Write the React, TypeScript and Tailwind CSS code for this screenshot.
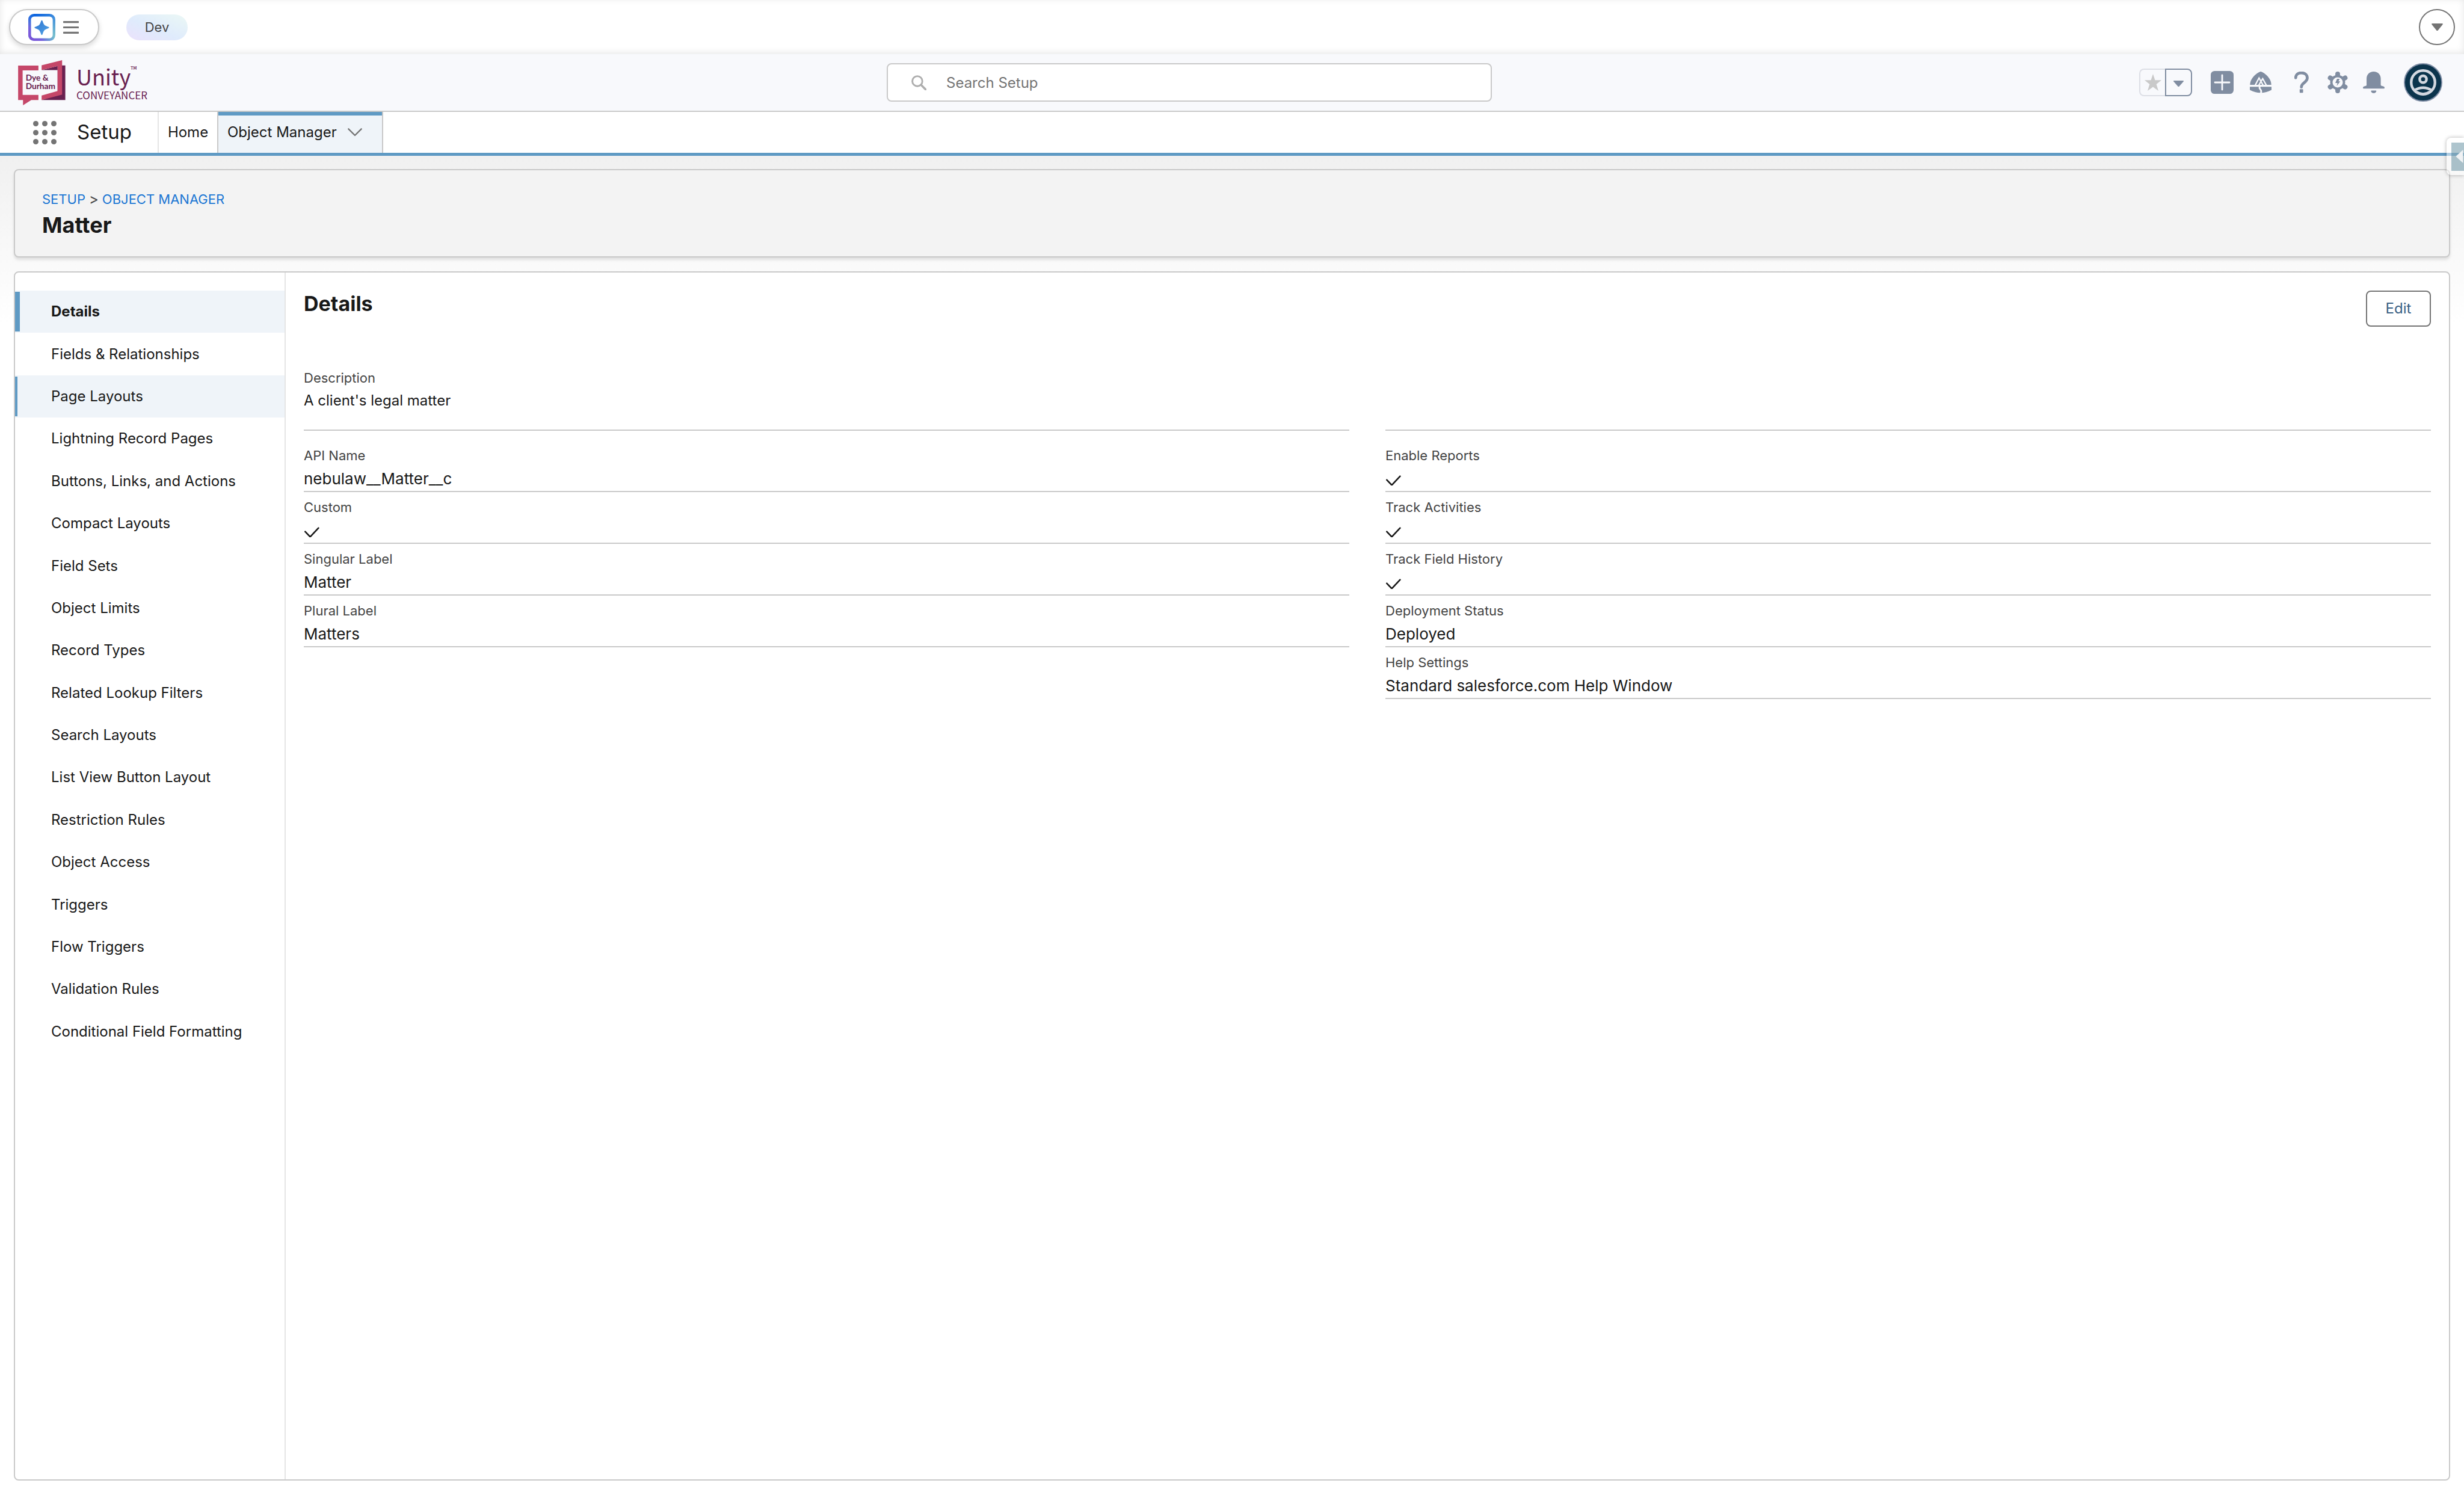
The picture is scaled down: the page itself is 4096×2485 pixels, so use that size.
import type { ReactNode } from "react";

type Field = { label: string; value: string | true };

const SECTIONS = [
  "Details",
  "Fields & Relationships",
  "Page Layouts",
  "Lightning Record Pages",
  "Buttons, Links, and Actions",
  "Compact Layouts",
  "Field Sets",
  "Object Limits",
  "Record Types",
  "Related Lookup Filters",
  "Search Layouts",
  "List View Button Layout",
  "Restriction Rules",
  "Object Access",
  "Triggers",
  "Flow Triggers",
  "Validation Rules",
  "Conditional Field Formatting",
];

const LEFT_FIELDS: Field[] = [
  { label: "API Name", value: "nebulaw__Matter__c" },
  { label: "Custom", value: true },
  { label: "Singular Label", value: "Matter" },
  { label: "Plural Label", value: "Matters" },
];

const RIGHT_FIELDS: Field[] = [
  { label: "Enable Reports", value: true },
  { label: "Track Activities", value: true },
  { label: "Track Field History", value: true },
  { label: "Deployment Status", value: "Deployed" },
  { label: "Help Settings", value: "Standard salesforce.com Help Window" },
];

function EnvironmentBar() {
  return (
    <div className="flex h-[90px] items-center bg-white px-[15px] shadow-[inset_0_-2px_12px_rgba(0,0,0,0.1)]">
      <button
        aria-label="Open menu"
        className="flex h-[60px] w-[150px] items-center gap-[13px] rounded-full border-2 border-[#c9c9c9] bg-white pl-[30px] shadow-[0_4px_8px_rgba(0,0,0,0.15)]"
      >
        <svg viewBox="150 71 144 144" className="size-[45px]">
          <defs>
            <linearGradient id="frame" x1="0.2" y1="0" x2="0.8" y2="1">
              <stop offset="0" stopColor="#0a63e0" />
              <stop offset="0.45" stopColor="#4290dc" />
              <stop offset="1" stopColor="#7cc3cc" />
            </linearGradient>
            <linearGradient id="corner" x1="0" y1="1" x2="0.6" y2="0.4">
              <stop offset="0" stopColor="#8052d8" />
              <stop offset="0.4" stopColor="#7560dc" />
              <stop offset="1" stopColor="#4290dc" stopOpacity="0" />
            </linearGradient>
            <linearGradient id="spark" x1="0" y1="0" x2="1" y2="1">
              <stop offset="0" stopColor="#2f74d0" />
              <stop offset="1" stopColor="#4fa3e6" />
            </linearGradient>
          </defs>
          <rect x="157" y="78" width="130" height="130" rx="24" fill="white" stroke="url(#frame)" strokeWidth="14" />
          <rect x="157" y="78" width="130" height="130" rx="24" fill="none" stroke="url(#corner)" strokeWidth="14" />
          <path
            d="M222 105c3 0 4 4 6 10 5 14 9 18 23 23 6 2 10 3 10 6s-4 4-10 6c-14 5-18 9-23 23-2 6-3 10-6 10s-4-4-6-10c-5-14-9-18-23-23-6-2-10-3-10-6s4-4 10-6c14-5 18-9 23-23 2-6 3-10 6-10Z"
            fill="url(#spark)"
          />
        </svg>
        <svg viewBox="0 0 82 66" className="h-[21px] w-[26px]" fill="#747474">
          <rect width="82" height="10" rx="2" />
          <rect y="28" width="82" height="10" rx="2" />
          <rect y="56" width="82" height="10" rx="2" />
        </svg>
      </button>
      <span className="ml-[45px] flex h-[43px] w-[102px] items-center justify-center rounded-full bg-[linear-gradient(to_top_right,#ebe1fb_0%,#dfebfc_45%,#ebf8f5_100%)] text-[22px] text-[#444]">
        Dev
      </span>
      <button
        aria-label="Collapse bar"
        className="ml-auto flex size-[60px] items-center justify-center rounded-full border-2 border-[#747474] bg-white"
      >
        <svg viewBox="0 0 60 40" className="w-[19px]" fill="#747474">
          <path d="M4 0h52q6 1 2 6L33 37q-3 4-6 0L2 6Q-2 1 4 0Z" />
        </svg>
      </button>
    </div>
  );
}

function Logo() {
  return (
    <a href="#home" className="flex items-center pl-[30px] text-[#692150]">
      <svg viewBox="96 318 252 240" className="h-[75px] w-[79px]">
        <path d="M306 346h41v184H221l85-30Z" fill="#692150" />
        <path d="M221 371l85-22v22Z" fill="#692150" />
        <path d="M96 347h108v25h-84v131h84v27h-38l-44 28v-28H96Z" fill="#c54769" />
        <path d="M221 345l109-27v183l-109 29v-24l85-24V349l-85 22Z" fill="#c54769" />
        <text x="136" y="427" fontFamily="Lato" fontWeight="700" fontSize="44" fill="#692150">
          Dye &amp;
        </text>
        <text x="136" y="473" fontFamily="Lato" fontWeight="700" fontSize="44" fill="#692150">
          Durham
        </text>
      </svg>
      <span className="flex flex-col pl-[18px] font-['Noto_Sans_CJK_SC',sans-serif]">
        <span className="flex items-start text-[36px] leading-[42px]">
          Unity
          <span className="text-[14px] leading-[20px]">™</span>
        </span>
        <span className="text-[17px] leading-[22px]">CONVEYANCER</span>
      </span>
    </a>
  );
}

function IconButton({ label, children, className = "" }: { label: string; children: ReactNode; className?: string }) {
  return (
    <button aria-label={label} className={`flex h-[60px] w-[60px] items-center justify-center ${className}`}>
      {children}
    </button>
  );
}

function GlobalActions() {
  return (
    <div className="flex items-center justify-end pr-[36px] text-[#808da1]">
      <div className="mr-5 flex h-[46px] w-[88px]">
        <button
          aria-label="Add favorite"
          className="flex flex-1 items-center justify-center rounded-l-lg border-2 border-r-0 border-[#dddfe6]"
        >
          <svg viewBox="51 93 90 90" className="size-[28px]" fill="#c9c9c9">
            <path d="M96 93l11 33h34l-27 22 11 35-29-21-29 21 11-35-27-22h34Z" />
          </svg>
        </button>
        <button
          aria-label="Favorites list"
          className="flex flex-1 items-center justify-center rounded-r-lg border-2 border-[#808da1]"
        >
          <svg viewBox="0 0 54 34" className="mt-1 w-[17px]" fill="currentColor">
            <path d="M3 0h48q5 1 2 5L29 32q-2 3-4 0L1 5Q-2 1 3 0Z" />
          </svg>
        </button>
      </div>

      <IconButton label="Global actions" className="mr-1">
        <svg viewBox="0 0 120 120" className="size-[38px]">
          <rect width="120" height="120" rx="20" fill="currentColor" />
          <path d="M60 22v76M22 60h76" stroke="#f8f9fc" strokeWidth="9" strokeLinecap="round" />
        </svg>
      </IconButton>

      <IconButton label="Guidance center" className="mr-2">
        <svg viewBox="610 83 113 113" className="size-[36px]">
          <path d="M667 83c6 0 54 26 55 69H611c1-43 49-69 56-69Z" fill="currentColor" />
          <path
            d="M638 154l20-38 10 18 9-14 19 34M668 134l-11 20M668 134l11 20"
            fill="none"
            stroke="#f8f9fc"
            strokeWidth="7"
          />
          <path d="M610 162h113v17c-34 20-79 20-113 0Z" fill="currentColor" />
          <path d="M664 160c-14 14 14 14 3 36" fill="none" stroke="#f8f9fc" strokeWidth="9" />
        </svg>
      </IconButton>

      <IconButton label="Help">
        <svg viewBox="845 83 76 113" className="h-[36px] w-[24px]">
          <path
            d="M852 115c0-16 12-26 30-26 19 0 31 11 31 27 0 25-31 24-31 48"
            fill="none"
            stroke="currentColor"
            strokeWidth="15"
            strokeLinecap="round"
          />
          <rect x="873" y="175" width="18" height="19" rx="3" fill="currentColor" />
        </svg>
      </IconButton>

      <IconButton label="Setup">
        <svg viewBox="-58 -58 116 116" className="size-[38px]" fill="currentColor">
          <g stroke="currentColor" strokeWidth="24" strokeLinecap="round">
            <path d="M0 -43V43" />
            <path d="M-38 -23L38 23" />
            <path d="M-38 23L38 -23" />
          </g>
          <circle r="38" />
          <circle r="26" fill="#f8f9fc" />
          <path d="M-3 -18h13l-6 13h9L-5 18l4-15h-11Z" />
        </svg>
      </IconButton>

      <IconButton label="Notifications">
        <svg viewBox="130 381 113 113" className="size-[36px]" fill="currentColor">
          <path d="M149 452v-34c0-20 14-37 37-37s37 17 37 37v34q1 4 8 4 12 2 12 10 0 4-4 4H134q-4 0-4-4 0-8 12-10 7 0 7-4Z" />
          <path d="M176 480h21q4 0 3 3c-3 14-25 14-28 0q0-3 4-3Z" />
        </svg>
      </IconButton>

      <button aria-label="View profile" className="ml-5 size-16">
        <svg viewBox="348 336 204 204" className="size-16">
          <circle cx="450" cy="438" r="99" fill="#0b344c" stroke="#7f8da5" strokeWidth="6" />
          <g fill="none" stroke="#d3d8e0" strokeWidth="14">
            <circle cx="450" cy="438" r="63" />
            <circle cx="450" cy="421" r="18" />
            <path d="M404 480q46-28 92 0" />
          </g>
          <path d="M418 484q32 22 64 0" fill="none" stroke="#d3d8e0" strokeWidth="4" />
        </svg>
      </button>
    </div>
  );
}

function GlobalHeader() {
  return (
    <header className="grid h-[96px] grid-cols-[1474fr_1006fr_1616fr] items-center border-b-2 border-[#c9c9c9] bg-[#f8f9fc]">
      <Logo />
      <label className="flex h-16 items-center gap-[33px] rounded-lg border-2 border-[#c9c9c9] bg-white pl-[39px]">
        <svg viewBox="0 0 78 78" className="size-[25px]" fill="none" stroke="#aeaeae" strokeWidth="9">
          <circle cx="31" cy="31" r="26" />
          <path d="M50 50l24 24" strokeWidth="11" strokeLinecap="round" />
        </svg>
        <input
          type="text"
          aria-label="Search Setup"
          placeholder="Search Setup"
          className="h-full flex-1 bg-transparent text-[24px] text-[#181818] outline-none placeholder:text-[#747474]"
        />
      </label>
      <GlobalActions />
    </header>
  );
}

function NavBar() {
  return (
    <nav className="flex h-[73px] items-stretch border-b-[5px] border-[#5f9ac4] bg-white text-[24px] text-[#181818]">
      <div className="flex w-[264px] items-center gap-[34px] border-r-2 border-[#e5e5e5] pl-[55px]">
        <button aria-label="App launcher" className="grid grid-cols-3 gap-[6px]">
          {Array.from({ length: 9 }, (_, i) => (
            <span key={i} className="size-[9px] rounded-full bg-[#747474]" />
          ))}
        </button>
        <span className="text-[33px]">Setup</span>
      </div>
      <a href="#home" className="flex w-[97px] items-center justify-center">
        Home
      </a>
      <a
        href="#object-manager"
        className="flex w-[276px] items-center gap-[18px] border-x-2 border-[#c9c9c9] bg-[#eff4f9] pl-[15px] shadow-[inset_0_6px_0_#5f9ac4]"
      >
        Object Manager
        <svg viewBox="0 0 72 42" className="w-[24px]" fill="none" stroke="#747474" strokeWidth="7">
          <path d="M4 4l32 32L68 4" strokeLinecap="round" strokeLinejoin="round" />
        </svg>
      </a>
    </nav>
  );
}

function PageHeader() {
  return (
    <div className="h-[147px] rounded-lg border-2 border-[#c9c9c9] bg-[#f3f3f3] px-[45px] pt-[33px] shadow-[0_4px_4px_rgba(0,0,0,0.1)]">
      <div className="flex gap-[6px] text-[22px] leading-[30px] text-[#444]">
        <a href="#setup" className="text-[#1b76d3]">
          SETUP
        </a>
        <span className="text-[24px]">&gt;</span>
        <a href="#object-manager" className="text-[#1b76d3]">
          OBJECT MANAGER
        </a>
      </div>
      <h1 className="mt-[6px] text-[36px] leading-[44px] font-bold text-[#181818]">Matter</h1>
    </div>
  );
}

function Sidebar() {
  return (
    <ul className="grid h-[1267px] auto-rows-fr text-[24px] text-[#181818]">
      {SECTIONS.map((name) => {
        const active = name === "Details";
        const hovered = name === "Page Layouts";
        return (
          <li key={name} className={active || hovered ? "bg-[#eff4f9]" : ""}>
            <a href={`#${name}`} className={`flex h-full items-center ${active ? "font-bold" : ""}`}>
              <span className="flex w-[60px] self-stretch py-[2px]">
                {active && <span className="w-[8px] bg-[#5f9ac4]" />}
                {hovered && <span className="w-[4px] bg-[#5f9ac4]" />}
              </span>
              {name}
            </a>
          </li>
        );
      })}
    </ul>
  );
}

function FieldRow({ label, value }: Field) {
  return (
    <div className="h-[86px] border-b-2 border-[#c9c9c9] pt-[9px]">
      <dt className="text-[22px] leading-[32px] text-[#444]">{label}</dt>
      <dd className="flex h-[43px] items-center pt-[2px] text-[26px] text-[#181818]">
        {value === true ? (
          <svg viewBox="0 0 78 56" className="mt-[6px] ml-px w-[25px]" fill="none" stroke="#181818" strokeWidth="8">
            <title>Yes</title>
            <path d="M4 24l26 27L73 5" strokeLinecap="round" />
          </svg>
        ) : (
          value
        )}
      </dd>
    </div>
  );
}

function Details() {
  return (
    <section className="flex-1 px-[30px] pt-[30px]">
      <div className="flex h-[128px] items-start justify-between">
        <h2 className="text-[34px] leading-[44px] font-bold text-[#181818]">Details</h2>
        <button className="h-[60px] w-[108px] rounded-lg border-2 border-[#747474] bg-white text-[24px] text-[#3b6185]">
          Edit
        </button>
      </div>
      <div className="grid grid-cols-2 gap-x-[60px]">
        <dl className="h-[105px] border-b-2 border-[#c9c9c9]">
          <dt className="text-[22px] leading-[34px] text-[#444]">Description</dt>
          <dd className="mt-[4px] text-[24px] leading-[34px] text-[#181818]">A client's legal matter</dd>
        </dl>
        <div className="border-b-2 border-[#c9c9c9]" />
        <dl className="pt-[16px]">
          {LEFT_FIELDS.map((f) => (
            <FieldRow key={f.label} {...f} />
          ))}
        </dl>
        <dl className="pt-[16px]">
          {RIGHT_FIELDS.map((f) => (
            <FieldRow key={f.label} {...f} />
          ))}
        </dl>
      </div>
    </section>
  );
}

export default function App() {
  return (
    <div className="relative flex min-h-screen flex-col overflow-hidden bg-white font-['Inter',sans-serif]">
      <EnvironmentBar />
      <GlobalHeader />
      <NavBar />
      <main className="flex flex-1 flex-col gap-[23px] bg-[linear-gradient(#f0f0f0,#fff_280px)] px-[23px] pt-[22px] pb-[24px]">
        <PageHeader />
        <div className="flex flex-1 rounded-lg border-2 border-[#c9c9c9] bg-white">
          <aside className="w-[450px] border-r-2 border-[#e5e5e5] pt-[30px]">
            <Sidebar />
          </aside>
          <Details />
        </div>
      </main>

      {/* drawer handle on the right edge, over the nav and the page header */}
      <button
        aria-label="Open panel"
        className="absolute top-[229px] right-0 h-[62px] w-[29px] rounded-l-lg bg-white/50 pl-[8px] shadow-[0_0_6px_rgba(0,0,0,0.3)]"
      >
        <span className="flex h-[47px] items-center justify-end bg-[#165873]/35 pr-px">
          <svg viewBox="0 0 42 78" className="h-[22px] w-[13px]" fill="#f0f2f4">
            <path d="M42 0v78L2 42q-3-3 0-6Z" />
          </svg>
        </span>
      </button>
    </div>
  );
}
